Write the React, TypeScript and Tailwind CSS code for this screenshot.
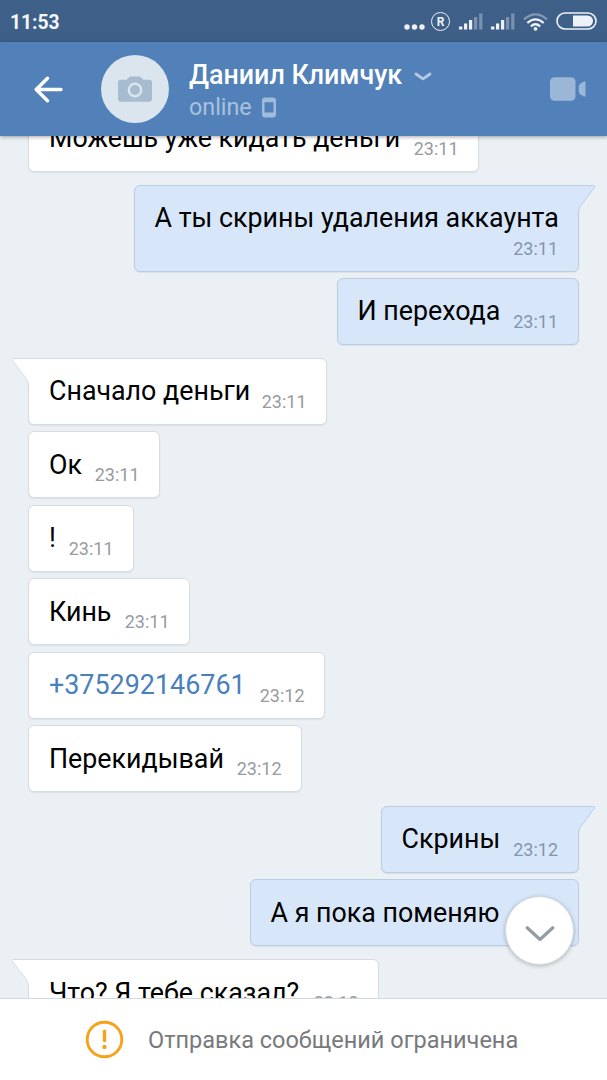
import React from 'react';
import clsx from 'clsx';

interface Message {
  text: string;
  time: string;
  // width and top offset of the bubble
  box: string;
  out?: boolean;
  tail?: boolean;
  link?: boolean;
  stacked?: boolean;
}

const messages: Message[] = [
  { text: 'Можешь уже кидать деньги', time: '23:11', box: 'w-[451px]' },
  { text: 'А ты скрины удаления аккаунта', time: '23:11', box: 'w-[445px] mt-[13px]', out: true, tail: true, stacked: true },
  { text: 'И перехода', time: '23:11', box: 'w-[242px] mt-[6px]', out: true },
  { text: 'Сначало деньги', time: '23:11', box: 'w-[299px] mt-[13px]', tail: true },
  { text: 'Ок', time: '23:11', box: 'w-[132px] mt-[6.5px]' },
  { text: '!', time: '23:11', box: 'w-[106px] mt-[6.5px]' },
  { text: 'Кинь', time: '23:11', box: 'w-[162px] mt-[6.5px]' },
  { text: '+375292146761', time: '23:12', box: 'w-[297px] mt-[6.5px]', link: true },
  { text: 'Перекидывай', time: '23:12', box: 'w-[274px] mt-[6.5px]' },
  { text: 'Скрины', time: '23:12', box: 'w-[198px] mt-[13.5px]', out: true, tail: true },
  { text: 'А я пока поменяю', time: '23:12', box: 'w-[329px] mt-[6.5px]', out: true },
  { text: 'Что? Я тебе сказал?', time: '23:12', box: 'w-[351px] mt-[13px]', tail: true },
];

const Tail = ({ out }: { out?: boolean }) => (
  <svg
    className={clsx('absolute -top-px', out ? '-right-[18px] -scale-x-100' : '-left-[18px]')}
    width="20"
    height="29"
    viewBox="0 0 20 29"
  >
    <path
      d="M20 .5H2.2C1 .5.8 1.6 1.5 2.4L14.5 19.5C16.6 22.3 17.5 24.5 17.5 28.5H20Z"
      className={out ? 'fill-[#d7e7f9]' : 'fill-white'}
    />
    <path
      d="M20 .5H2.2C1 .5.8 1.6 1.5 2.4L14.5 19.5C16.6 22.3 17.5 24.5 17.5 29"
      fill="none"
      className={out ? 'stroke-[#b9cde5]' : 'stroke-[#d7dce1]'}
    />
  </svg>
);

const Bubble = ({ message }: { message: Message }) => {
  const { text, time, box, out, tail, link, stacked } = message;
  return (
    <div
      className={clsx(
        'relative shrink-0 flex justify-between border rounded-[6px] whitespace-nowrap shadow-[0_1px_1px_rgba(100,120,145,0.12)]',
        box,
        stacked ? 'h-[87px]' : 'h-[67px]',
        out
          ? 'self-end pl-[19.5px] pr-[20px] bg-[#d7e7f9] border-[#b9cde5]'
          : 'self-start pl-[20px] pr-[19.5px] bg-white border-[#d7dce1]',
        tail && (out ? 'rounded-tr-none' : 'rounded-tl-none'),
      )}
    >
      {tail && <Tail out={out} />}
      <span className={clsx('mt-[16.5px] leading-8', link ? 'text-[26.9px] text-[#4a7fbd]' : 'text-[26.8px] text-black')}>
        {text}
      </span>
      <span
        className={clsx(
          'text-[18px] leading-[22px]',
          stacked ? 'absolute right-[20px] top-[52.5px]' : 'mt-[32px]',
          out ? 'text-[#8496ac]' : 'text-[#989b9f]',
        )}
      >
        {time}
      </span>
    </div>
  );
};

const Signal = () => (
  <svg width="24" height="17" viewBox="0 0 24 17" fill="#eef2f8">
    <rect x="0" y="13.5" width="3.4" height="3" />
    <rect x="5" y="10.5" width="3.2" height="6" />
    <rect x="10" y="7" width="3.2" height="9.5" />
    <g opacity="0.35">
      <rect x="15" y="4" width="3.2" height="12.5" />
      <rect x="20.2" y="0.5" width="3.2" height="16" />
    </g>
  </svg>
);

const StatusBar = () => (
  <div className="h-[42px] bg-[#3d5f88] flex items-center justify-between pl-[10px] pr-[10px]">
    <span className="text-[19.3px] font-bold leading-6 text-[#f3f6fa] pt-[3px]">11:53</span>
    <div className="flex items-center">
      <svg width="21" height="6" viewBox="0 0 21 6" fill="#eef2f8" className="mt-[11px]">
        <circle cx="3" cy="3" r="2.7" />
        <circle cx="10.5" cy="3" r="2.7" />
        <circle cx="18" cy="3" r="2.7" />
      </svg>
      <div className="ml-[6px] mt-px w-[19px] h-[19px] rounded-full border-[1.5px] border-[#eef2f8] text-[#eef2f8] text-[12px] leading-none font-bold flex items-center justify-center">
        R
      </div>
      <div className="ml-[9px] mt-px flex"><Signal /></div>
      <div className="ml-[8px] mt-px flex"><Signal /></div>
      <svg width="25" height="18" viewBox="0 0 25 18" fill="none" stroke="#eef2f8" strokeWidth="2.2" className="ml-[8px] mt-px">
        <path d="M1 6.4Q12.5 -3.6 24 6.4" opacity="0.4" />
        <path d="M4.3 10Q12.5 2.6 20.7 10" />
        <path d="M7.8 13.3Q12.5 9.2 17.2 13.3" />
        <circle cx="12.5" cy="15.8" r="1.9" fill="#eef2f8" stroke="none" />
      </svg>
      <svg width="41" height="18" viewBox="0 0 41 18" className="ml-[8px]">
        <rect x="1" y="1" width="39" height="16" rx="8" fill="none" stroke="#eef2f8" strokeWidth="1.6" />
        <path d="M17 3.5H31.5A5.5 5.5 0 0 1 31.5 14.5H17Z" fill="#eef2f8" />
      </svg>
    </div>
  </div>
);

const Header = () => (
  <div className="h-[94px] bg-[#5181b8] flex items-center relative z-10 shadow-[0_1px_4px_rgba(0,0,0,0.35)] pl-[34px] pr-[21px]">
    <svg width="29" height="27" viewBox="0 0 29 27" fill="none" stroke="white" strokeWidth="3.4" strokeLinecap="round" strokeLinejoin="round">
      <path d="M27 13.5H2.5M13.5 2.2L2.2 13.5L13.5 24.8" />
    </svg>
    <div className="ml-[38px] w-[68px] h-[68px] rounded-full bg-[#dae5ee] flex items-center justify-center">
      <svg width="34" height="26" viewBox="0 0 34 26">
        <path d="M3 3.7H8.5L11.2 1.2Q12 .5 13.2 .5H20.8Q22 .5 22.8 1.2L25.5 3.7H31Q34 3.7 34 6.5V23Q34 25.8 31 25.8H3Q0 25.8 0 23V6.5Q0 3.7 3 3.7Z" fill="#a7bccf" />
        <circle cx="17" cy="14" r="6.2" fill="none" stroke="#dae5ee" strokeWidth="2.4" />
      </svg>
    </div>
    <div className="ml-[20px] flex-1 pt-[3px]">
      <div className="flex items-center">
        <span className="text-[26.8px] leading-[32px] font-medium text-white whitespace-nowrap">Даниил Климчук</span>
        <svg width="18" height="9" viewBox="0 0 18 9" fill="none" stroke="#b5cbe4" strokeWidth="2.8" strokeLinecap="round" strokeLinejoin="round" className="ml-[12px] mt-[2px]">
          <path d="M2 2L9 6.8L16 2" />
        </svg>
      </div>
      <div className="flex items-center mt-px">
        <span className="text-[23.3px] leading-[30px] text-[#a9c1de]">online</span>
        <svg width="14" height="21" viewBox="0 0 14 21" className="ml-[10px] mt-px">
          <path fillRule="evenodd" d="M3 .5H11Q14 .5 14 3.5V17.5Q14 20.5 11 20.5H3Q0 20.5 0 17.5V3.5Q0 .5 3 .5ZM2.5 5.2V15.6H11.5V5.2Z" fill="#a0bbdb" />
        </svg>
      </div>
    </div>
    <svg width="36" height="24" viewBox="0 0 36 24" fill="#9bb6d7">
      <rect x="0" y="0.3" width="25.5" height="23.4" rx="4.5" />
      <path d="M35.5 5.8V18.2Q35.5 20.5 33.5 19.3L30.2 17.2Q28.8 16.3 28.8 14.6V9.4Q28.8 7.7 30.2 6.8L33.5 4.7Q35.5 3.5 35.5 5.8Z" />
    </svg>
  </div>
);

const Footer = () => (
  <div className="h-[82px] bg-white border-t border-[#d2d7dc] flex items-center pl-[85px] relative z-20">
    <svg width="39" height="39" viewBox="0 0 39 39" fill="none" stroke="#f8a21b" strokeLinecap="round">
      <circle cx="19.5" cy="19.5" r="17.3" strokeWidth="2.9" />
      <path d="M19.5 11.3V20.5" strokeWidth="3.4" />
      <circle cx="19.5" cy="27" r="2.2" fill="#f8a21b" stroke="none" />
    </svg>
    <span className="ml-[24px] text-[23.5px] leading-[30px] text-[#77797d] whitespace-nowrap">
      Отправка сообщений ограничена
    </span>
  </div>
);

export default function App() {
  return (
    <div className="w-[607px] h-[1080px] flex flex-col overflow-hidden bg-[#ebf0f4] font-[Roboto,sans-serif]">
      <StatusBar />
      <Header />
      <div className="relative h-[862px] overflow-hidden">
        <div className="flex flex-col pl-[28px] pr-[28px] -mt-[31.5px]">
          {messages.map((message) => (
            <Bubble key={message.text} message={message} />
          ))}
        </div>
        <button className="absolute left-[505px] top-[760px] w-[69px] h-[69px] rounded-full bg-white border border-[#d3d9e0] shadow-[0_1px_4px_rgba(0,0,0,0.25)] flex items-center justify-center">
          <svg width="30" height="18" viewBox="0 0 30 18" fill="none" stroke="#949ca6" strokeWidth="3.2" strokeLinecap="round" strokeLinejoin="round" className="mt-[6px]">
            <path d="M2.2 2.8L15 14.5L27.8 2.8" />
          </svg>
        </button>
      </div>
      <Footer />
    </div>
  );
}
